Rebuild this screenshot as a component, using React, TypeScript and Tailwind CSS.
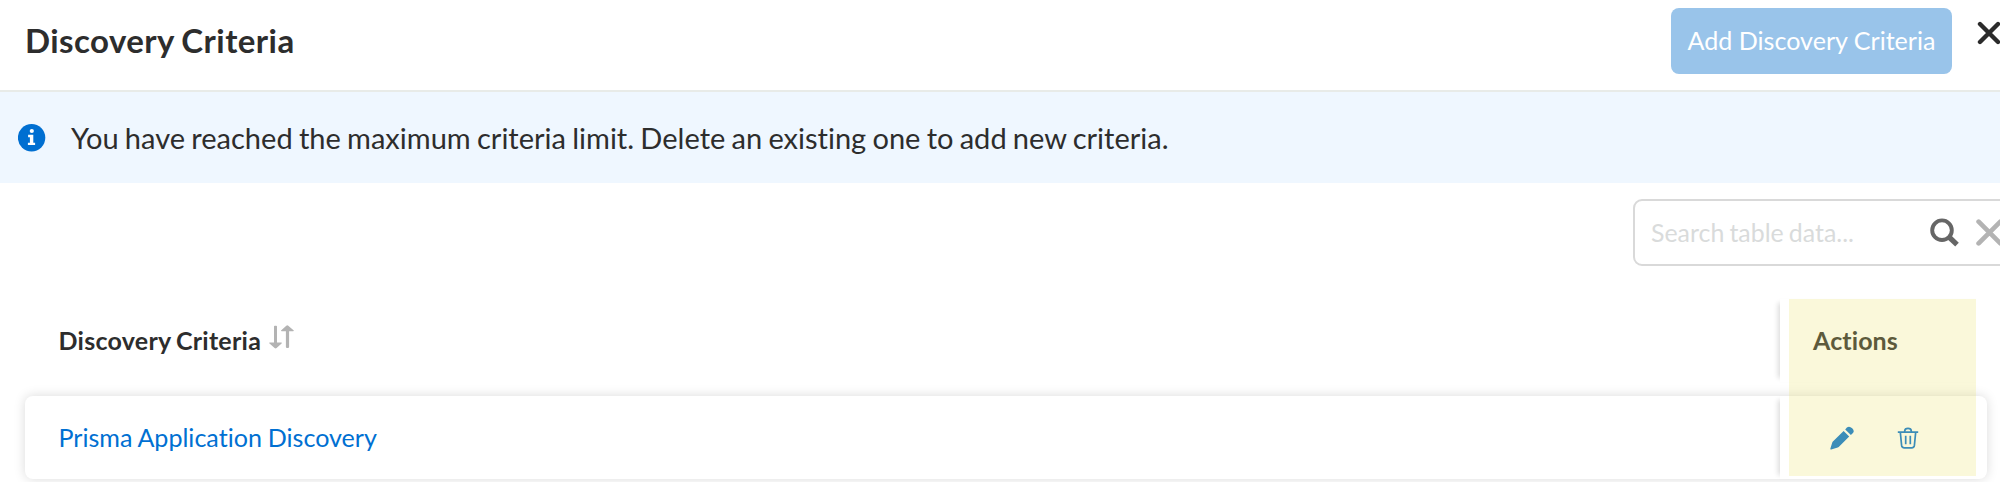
const InfoIcon = () => (
  <svg className="h-[28px] w-[28px] shrink-0" viewBox="0 0 28 28">
    <circle cx="13.600" cy="13.8" r="13.7" fill="#006fd1" />
    <circle cx="13.800" cy="7" r="2.1" fill="#fff" />
    <path d="M10.100 10.8h5.2v8h1.8v2.3h-7.2v-2.3h2v-5.6h-1.8z" fill="#fff" />
  </svg>
);

const SearchIcon = () => (
  <svg className="h-[30px] w-[30px] shrink-0" viewBox="0 0 30 30">
    <circle cx="12" cy="12.2" r="9.800" fill="none" stroke="#666" strokeWidth="3.900" />
    <path d="M19 19L27 26.600" stroke="#666" strokeWidth="5.2" />
  </svg>
);

const SortIcon = () => (
  <svg className="h-[24px] w-[26px] shrink-0" viewBox="0 0 26 24">
    <path d="M5 1.6Q5 .8 5.8 .8h1.4Q8 .8 8 1.6V17.5h4.2q1.2 0 .4 1L7.6 23q-1 .8-2 0L.5 18.500q-.9-1 .4-1H5z" fill="#b3b3b3" />
    <path d="M20.100 22.100q0 .8-.8.8h-1.600q-.8 0-.8-.8V6.200h-4.200q-1.200 0-.4-1l5-4.500q1-.8 2 0l5.200 4.500q.9 1-.4 1h-4z" fill="#b3b3b3" />
  </svg>
);

const PencilIcon = () => (
  <svg className="h-[24px] w-[24px] shrink-0" viewBox="0 0 24 24">
    <path d="M13.600 4.900L19.200 10.500 8.700 21Q8.300 21.400 7.700 21.600L1.200 23.400Q.2 23.600.4 22.600L2.200 16.700Q2.400 16 2.900 15.500zM15.200 3.400L16.900 1.500Q19.300-.4 22.200 2.200 25 5.100 22.700 7.300L20.900 9.100z" fill="#0070d2" />
  </svg>
);

const TrashIcon = () => (
  <svg className="h-[22px] w-[22px] shrink-0" viewBox="0 0 22 22" fill="none" stroke="#0070d2" strokeWidth="1.700">
    <path d="M.8 5.200h20.400M7.700 5V4q0-2.700 3.300-2.700T14.300 4v1M3.300 5.200l1.300 13.200q.3 2.400 2.700 2.400h7.400q2.400 0 2.700-2.400L18.700 5.200M8.700 8.800v8.400M13.300 8.800v8.400" />
  </svg>
);

const Cross = ({ className, weight }: { className: string; weight: number }) => (
  <svg className={className} viewBox="0 0 24 24" fill="none" stroke="currentColor" strokeWidth={weight} strokeLinecap="round">
    <path d="M3 3l18 18M21 3L3 21" />
  </svg>
);

export default function App() {
  return (
    <div className="h-[482px] w-[2000px] overflow-hidden bg-white font-['Lato',sans-serif] text-[#2d2d2d] [font-variant-ligatures:none] [word-spacing:-1.200px]">
      <header className="flex h-[92px] items-start border-b-2 border-[#e8ebe8] pl-[25px]">
        <h1 className="mt-[20px] text-[33px] leading-[40px] font-bold tracking-[0.440px] whitespace-nowrap">Discovery Criteria</h1>
        <button className="mt-[8px] ml-auto h-[66px] w-[281px] rounded-[8px] bg-[#99c4ea] text-[25.100px] whitespace-nowrap text-white">
          Add Discovery Criteria
        </button>
        <Cross weight={4.4} className="mt-[21px] -mr-[1px] ml-[25px] h-[24px] w-[24px] shrink-0 text-[#2b2b2b]" />
      </header>

      <div className="flex h-[91px] items-center bg-[#eff7ff] pl-[18px]">
        <InfoIcon />
        <p className="mt-[1px] ml-[25px] text-[29.040px] leading-[40px] whitespace-nowrap">
          You have reached the maximum criteria limit. Delete an existing one to add new criteria.
        </p>
      </div>

      <div className="flex h-[116px] pt-[16px] pl-[1633px]">
        <div className="flex h-[67px] w-[400px] shrink-0 items-center rounded-[9px] border-2 border-[#d9d9d9] pl-[16px]">
          <span className="w-[279px] shrink-0 text-[24.900px] whitespace-nowrap text-[#d9dbdb]">Search table data...</span>
          <SearchIcon />
          <Cross weight={3.9} className="ml-[15px] h-[29px] w-[29px] shrink-0 text-[#b3b3b3]" />
        </div>
      </div>

      <main className="relative h-[183px] pl-[25px]">
        <div className="flex h-[83px] w-[1962px]">
          <div className="flex w-[1755px] items-center pl-[33.500px]">
            <span className="text-[25px] font-bold tracking-[0.260px] whitespace-nowrap">Discovery Criteria</span>
            <span className="mb-[8px] ml-[8px]"><SortIcon /></span>
          </div>
          <div className="flex flex-1 items-center pl-[33px] shadow-[-6px_0_5px_-4px_rgba(0,0,0,0.14)]">
            <span className="text-[25px] font-bold tracking-[0.100px]">Actions</span>
          </div>
        </div>
        <div className="mt-[14px] flex h-[83px] w-[1962px] rounded-[8px] bg-white shadow-[0_0_12px_rgba(0,0,0,0.15)]">
          <div className="flex w-[1755px] items-center overflow-hidden rounded-l-[8px] pl-[33.500px]">
            <a className="text-[25.080px] [word-spacing:-0.600px] whitespace-nowrap text-[#0070d2]">Prisma Application Discovery</a>
          </div>
          <div className="flex flex-1 items-center pl-[50px] shadow-[-6px_0_5px_-4px_rgba(0,0,0,0.14)]">
            <PencilIcon />
            <span className="ml-[43px]"><TrashIcon /></span>
          </div>
        </div>
        <div className="pointer-events-none absolute top-0 left-[1789px] h-[177px] w-[187px] bg-[#ebe36b]/25" />
      </main>
    </div>
  );
}
